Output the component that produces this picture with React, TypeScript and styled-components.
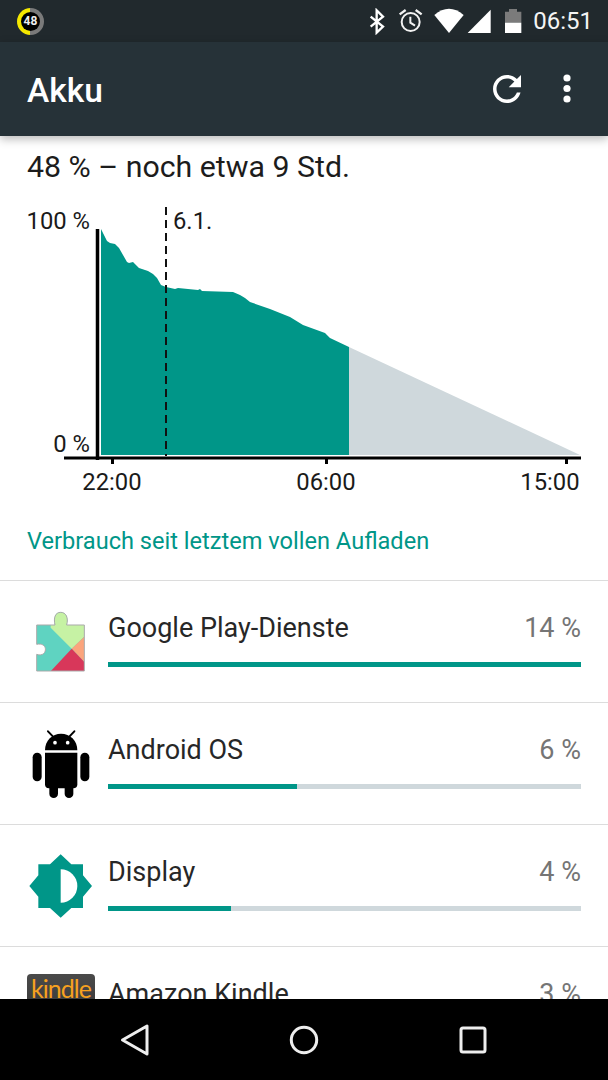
import styled, { createGlobalStyle } from 'styled-components';

const GlobalStyle = createGlobalStyle`
  html, body {
    margin: 0;
    padding: 0;
    background: #fff;
  }
  body {
    font-family: Roboto, "Liberation Sans", sans-serif;
  }
`;

const Screen = styled.div`
  width: 608px;
  height: 1080px;
  display: flex;
  flex-direction: column;
  overflow: hidden;
`;

const StatusBar = styled.div`
  height: 42px;
  flex: none;
  display: flex;
  align-items: center;
  padding: 0 15px 0 17px;
  background: #21292d;
  color: #fff;
`;

const BatteryBadge = styled.div`
  width: 27px;
  height: 27px;
  border-radius: 50%;
  background: linear-gradient(90deg, #f5e800 50%, #7a7a7a 50%);
  display: flex;
  align-items: center;
  justify-content: center;
`;

const BadgeText = styled.span`
  width: 19px;
  height: 19px;
  border-radius: 50%;
  background: #000;
  color: #eee;
  font-size: 12px;
  font-weight: 700;
  line-height: 19px;
  text-align: center;
`;

const Spacer = styled.div`
  flex: 1;
`;

const StatusGlyph = styled.svg<{ $left?: number }>`
  display: block;
  flex: none;
  margin-left: ${(p) => p.$left ?? 0}px;
`;

const Clock = styled.span`
  margin-left: 11px;
  font-size: 24px;
  line-height: 44px;
  color: #f4f4f4;
`;

const AppBar = styled.header`
  position: relative;
  z-index: 2;
  height: 94px;
  flex: none;
  display: flex;
  align-items: center;
  padding: 0 37px 0 27px;
  background: #263238;
  box-shadow: 0 3px 9px rgba(0, 0, 0, 0.28);
`;

const Title = styled.h1`
  flex: 1;
  margin: 3px 0 0;
  color: #fff;
  font-size: 33.5px;
  font-weight: 500;
`;

const Refresh = styled.svg`
  display: block;
  margin-right: 35px;
`;

const Content = styled.main`
  flex: 1;
  min-height: 0;
  overflow: hidden;
  background: #fff;
`;

const Summary = styled.div`
  padding: 14px 27px 0;
  height: 40px;
  font-size: 30.3px;
  line-height: 34px;
  color: #1c1c1c;
`;

const ChartSvg = styled.svg`
  display: block;
`;

const ChartLabel = styled.text`
  font-family: Roboto, "Liberation Sans", sans-serif;
  font-size: 23.8px;
  fill: #1a1a1a;
`;

const SectionLabel = styled.div`
  height: 80px;
  padding: 22px 27px 0;
  box-sizing: border-box;
  font-size: 23.6px;
  line-height: 38px;
  color: #009688;
`;

const Row = styled.div`
  height: 122px;
  box-sizing: border-box;
  border-top: 1px solid #dcdcdc;
  padding: 0 27px;
  display: flex;
  align-items: center;
  gap: 13px;
`;

const IconBox = styled.div`
  width: 68px;
  height: 68px;
  flex: none;
`;

const RowBody = styled.div`
  flex: 1;
  padding-bottom: 5px;
`;

const RowHead = styled.div`
  display: flex;
  justify-content: space-between;
  align-items: baseline;
  height: 50px;
  line-height: 32px;
`;

const RowName = styled.span`
  font-size: 27px;
  color: #272727;
`;

const RowPercent = styled.span`
  font-size: 27px;
  color: #757575;
`;

const Track = styled.div`
  height: 5px;
  background: #cfd8dc;
`;

const Fill = styled.div`
  height: 100%;
  background: #009688;
`;

const KindleTile = styled.div`
  width: 68px;
  height: 68px;
  border-radius: 4px;
  background: linear-gradient(180deg, #4a4a4a 0%, #2b2b2b 100%);
  color: #f7a11f;
  font-family: Lato, "Liberation Sans", sans-serif;
  font-size: 25px;
  line-height: 29px;
  letter-spacing: -1px;
  text-align: center;
`;

const NavBar = styled.nav`
  position: relative;
  z-index: 2;
  height: 81px;
  flex: none;
  display: flex;
  align-items: center;
  background: #000;
  padding: 0 0 0 119px;
`;

const NavGlyph = styled.svg<{ $left?: number }>`
  display: block;
  margin-left: ${(p) => p.$left ?? 0}px;
`;

const playOutline =
  'M50 72 H105 C100 50 106 34 122 34 C138 34 146 50 140 72 H193 V210 H50 V160 C82 172 88 122 50 130 Z';

const usedPath =
  'M101 229 L102 231 L107 241 L110 243 L115 244 L119 248 L123 255 L127 262 L129 263 L133 262 L139 268 L148 271 L153 274 L157 278 L161 285 L166 287 L175 289 L178 288 L198 290 L200 289 L202 291 L233 292 L240 295 L245 298 L250 302 L270 309 L290 317 L303 325 L325 333 L330 338 L349 347 L349 455 L101 455 Z';

const rows = [
  { name: 'Google Play-Dienste', percent: '14 %', bar: 100, icon: <PlayIcon /> },
  { name: 'Android OS', percent: '6 %', bar: 40, icon: <AndroidIcon /> },
  { name: 'Display', percent: '4 %', bar: 26, icon: <DisplayIcon /> },
  { name: 'Amazon Kindle', percent: '3 %', bar: 20, icon: <KindleTile>kindle</KindleTile> },
];

function PlayIcon() {
  return (
    <svg width="68" height="68" viewBox="21 21 204 204">
      <clipPath id="puzzle">
        <path d={playOutline} />
      </clipPath>
      <g clipPath="url(#puzzle)">
        <rect x="40" y="20" width="170" height="200" fill="#5fd3c1" />
        <path d="M92 20 H200 V100 L155 143 L92 80 Z" fill="#c6f2a4" />
        <path d="M195 105 L155 143 L195 185 Z" fill="#fba47c" />
        <path d="M155 143 L195 185 V215 H88 Z" fill="#d8375a" />
      </g>
      <path d={playOutline} fill="none" stroke="#a9a9a9" strokeWidth="3" />
    </svg>
  );
}

function AndroidIcon() {
  return (
    <svg width="68" height="68" viewBox="21 27 204 204">
      <path d="M84 31 L102 50 M163 31 L145 50" stroke="#000" strokeWidth="6" strokeLinecap="round" />
      <path d="M75 88 C75 58 97 38 123 38 C150 38 172 58 172 88 Z" fill="#000" />
      <circle cx="105" cy="65" r="5.5" fill="#fff" />
      <circle cx="143" cy="65" r="5.5" fill="#fff" />
      <path d="M75 95 H172 V190 Q172 202 160 202 H87 Q75 202 75 190 Z" fill="#000" />
      <rect x="38" y="95" width="27" height="86" rx="13.5" fill="#000" />
      <rect x="181" y="95" width="27" height="86" rx="13.5" fill="#000" />
      <rect x="88" y="185" width="26" height="46" rx="13" fill="#000" />
      <rect x="134" y="185" width="26" height="46" rx="13" fill="#000" />
    </svg>
  );
}

function DisplayIcon() {
  return (
    <svg width="68" height="68" viewBox="21 18 204 204">
      <path
        d="M122 25 L154 55 H189 V88 L216 120 L189 152 V186 H154 L122 215 L90 186 H55 V152 L28 120 L55 88 V55 H90 Z"
        fill="#009688"
      />
      <path d="M122 70 A50 50 0 0 1 122 170 Z" fill="#fff" />
    </svg>
  );
}

export default function App() {
  return (
    <Screen>
      <GlobalStyle />
      <StatusBar>
        <BatteryBadge>
          <BadgeText>48</BadgeText>
        </BatteryBadge>
        <Spacer />
        <StatusGlyph width="18" height="27" viewBox="195 24 54 81">
          <path
            d="M203 50 L240 80 L221 98 V31 L240 50 L203 80"
            fill="none"
            stroke="#fff"
            strokeWidth="7"
          />
        </StatusGlyph>
        <StatusGlyph $left={11} width="27" height="27" viewBox="282 24 81 81">
          <g fill="none" stroke="#f2f2f2" strokeWidth="6">
            <circle cx="323" cy="66" r="27" />
            <path d="M322 50 V68 L336 77" />
            <path d="M290 43 L308 30 M356 43 L338 30" strokeWidth="7" />
          </g>
        </StatusGlyph>
        <StatusGlyph $left={10} width="30" height="27" viewBox="393 24 90 81">
          <path d="M394 45 Q438 8 482 45 L438 99 Z" fill="#fff" />
        </StatusGlyph>
        <StatusGlyph $left={3} width="24" height="27" viewBox="492 24 72 81">
          <path d="M494 99 L563 29 V99 Z" fill="#fff" />
        </StatusGlyph>
        <StatusGlyph $left={13} width="18" height="27" viewBox="604 24 54 81">
          <path d="M619 27 H643 V35 H656 V68 H607 V35 H619 Z" fill="#7b7b7b" />
          <rect x="607" y="68" width="49" height="31" fill="#fff" />
        </StatusGlyph>
        <Clock>06:51</Clock>
      </StatusBar>

      <AppBar>
        <Title>Akku</Title>
        <Refresh width="42" height="42" viewBox="0 0 24 24">
          <path
            fill="#fff"
            d="M17.65 6.35C16.2 4.9 14.21 4 12 4c-4.42 0-7.99 3.58-7.99 8s3.57 8 7.99 8c3.73 0 6.84-2.55 7.73-6h-2.08c-.82 2.33-3.04 4-5.65 4-3.31 0-6-2.69-6-6s2.69-6 6-6c1.66 0 3.14.69 4.22 1.78L13 11h7V4l-2.35 2.35z"
          />
        </Refresh>
        <svg width="8" height="30" viewBox="0 0 8 30">
          <circle cx="4" cy="4" r="3.6" fill="#fff" />
          <circle cx="4" cy="14.5" r="3.6" fill="#fff" />
          <circle cx="4" cy="25" r="3.6" fill="#fff" />
        </svg>
      </AppBar>

      <Content>
        <Summary>48 % – noch etwa 9 Std.</Summary>
        {/* viewBox keeps the chart in screen coordinates, easier to compare */}
        <ChartSvg width="608" height="310" viewBox="0 190 608 310">
          <path d="M349 347 L580 455 H349 Z" fill="#cfd8dc" />
          <path d={usedPath} fill="#009688" />
          <path d="M97.5 229 V460" stroke="#000" strokeWidth="3.5" />
          <path d="M64 458 H581" stroke="#000" strokeWidth="3" />
          <path d="M112.5 459 V464 M326.5 459 V464 M566.5 459 V464" stroke="#000" strokeWidth="3" />
          <path d="M166 207 V456" stroke="#111" strokeWidth="2" strokeDasharray="8 5" />
          <ChartLabel x="90" y="229" textAnchor="end">100 %</ChartLabel>
          <ChartLabel x="90" y="452" textAnchor="end">0 %</ChartLabel>
          <ChartLabel x="173" y="229">6.1.</ChartLabel>
          <ChartLabel x="112" y="490" textAnchor="middle">22:00</ChartLabel>
          <ChartLabel x="326" y="490" textAnchor="middle">06:00</ChartLabel>
          <ChartLabel x="550" y="490" textAnchor="middle">15:00</ChartLabel>
        </ChartSvg>
        <SectionLabel>Verbrauch seit letztem vollen Aufladen</SectionLabel>
        {rows.map((row) => (
          <Row key={row.name}>
            <IconBox>{row.icon}</IconBox>
            <RowBody>
              <RowHead>
                <RowName>{row.name}</RowName>
                <RowPercent>{row.percent}</RowPercent>
              </RowHead>
              <Track>
                <Fill style={{ width: `${row.bar}%` }} />
              </Track>
            </RowBody>
          </Row>
        ))}
      </Content>

      <NavBar>
        <NavGlyph width="32" height="36" viewBox="0 0 32 36">
          <path
            d="M3.5 18 L28 4 V32 Z"
            fill="none"
            stroke="#eee"
            strokeWidth="3"
            strokeLinejoin="round"
          />
        </NavGlyph>
        <NavGlyph $left={138} width="30" height="30" viewBox="0 0 30 30">
          <circle cx="15" cy="15" r="12.7" fill="none" stroke="#eee" strokeWidth="3" />
        </NavGlyph>
        <NavGlyph $left={140} width="28" height="28" viewBox="0 0 28 28">
          <rect x="2" y="2" width="24" height="24" rx="2" fill="none" stroke="#eee" strokeWidth="3" />
        </NavGlyph>
      </NavBar>
    </Screen>
  );
}
